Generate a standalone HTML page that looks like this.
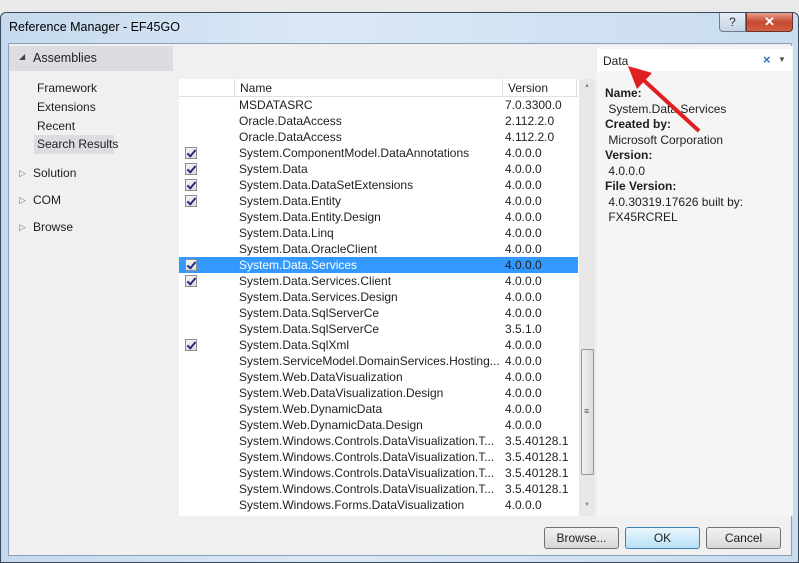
<!DOCTYPE html>
<html><head><style>
*{margin:0;padding:0;box-sizing:border-box}
body{width:799px;height:563px;background:#e9e9e9;font-family:"Liberation Sans",sans-serif;font-size:12px;color:#1e1e1e;position:relative;overflow:hidden}
.win{position:absolute;left:0;top:12px;width:799px;height:551px;border:1px solid #3a4a5a;border-radius:6px 6px 0 0;background:linear-gradient(90deg,#c5d9ee,#dbe8f5 40%,#c9dcf0);}
.title{position:absolute;left:8px;top:7px;font-size:12.5px;color:#000}
.client{position:absolute;left:7px;top:30px;width:784px;height:513px;background:#f0f0f0;border:1px solid #8aa0b8}
.abs{position:absolute}
.row{position:absolute;left:0;width:399px;height:16px;line-height:16px}
.row .n{position:absolute;left:60px}
.row .v{position:absolute;left:326px}
.cb{position:absolute;left:6px;top:2px;width:12px;height:12px;border:1px solid #8f8f8f;background:linear-gradient(#f4f4f4,#dcdcdc)}
.cb:after{content:"";position:absolute;left:3px;top:0px;width:3px;height:7px;border:solid #2a2a80;border-width:0 2px 2px 0;transform:rotate(40deg)}
.btn{position:absolute;height:22px;border:1px solid #707070;border-radius:3px;background:linear-gradient(#f2f2f2,#e5e5e5 50%,#d8d8d8);text-align:center;line-height:20px;font-size:12px}
</style></head><body>
<div class="win">
<div class="title">Reference Manager - EF45GO</div>
<div class="abs" style="left:718px;top:0;width:27px;height:19px;border:1px solid #6d7d8e;border-top:0;border-radius:0 0 0 4px;background:linear-gradient(#e6eef7,#c4d3e3);text-align:center;font-size:12px;line-height:18px;color:#333">?</div>
<div class="abs" style="left:745px;top:0;width:47px;height:19px;border:1px solid #6d3030;border-top:0;border-radius:0 0 4px 0;background:linear-gradient(#e8a090,#c74a30 50%,#d06040);text-align:center;color:#fff;font-weight:bold;font-size:13px;line-height:18px">✕</div>
<div class="client">
 <div class="abs" style="left:0;top:2px;width:164px;height:25px;background:#dcdde0"></div>
 <div class="abs" style="left:10px;top:8px;font-size:8px;color:#444">◢</div>
 <div class="abs" style="left:24px;top:7px;font-size:12.5px">Assemblies</div>
 <div class="abs" style="left:28px;top:35px;line-height:19px;font-size:12px">Framework<br>Extensions<br>Recent</div>
 <div class="abs" style="left:25px;top:91px;width:80px;height:19px;background:#dcdde0"></div>
 <div class="abs" style="left:28px;top:93px;font-size:12px">Search Results</div>
 <div class="abs" style="left:10px;top:124px;font-size:9px;color:#777">▷</div><div class="abs" style="left:24px;top:122px;font-size:12px">Solution</div>
 <div class="abs" style="left:10px;top:151px;font-size:9px;color:#777">▷</div><div class="abs" style="left:24px;top:149px;font-size:12px">COM</div>
 <div class="abs" style="left:10px;top:178px;font-size:9px;color:#777">▷</div><div class="abs" style="left:24px;top:176px;font-size:12px">Browse</div>

 <div class="abs" style="left:170px;top:35px;width:416px;height:437px;background:#fff"></div>
 <div class="abs" style="left:170px;top:35px;width:399px;height:18px;border-bottom:1px solid #e0e0e0"></div>
 <div class="abs" style="left:225px;top:35px;width:1px;height:18px;background:#e0e0e0"></div>
 <div class="abs" style="left:493px;top:35px;width:1px;height:18px;background:#e0e0e0"></div>
 <div class="abs" style="left:567px;top:35px;width:1px;height:18px;background:#e0e0e0"></div>
 <div class="abs" style="left:231px;top:37px;font-size:12px">Name</div>
 <div class="abs" style="left:499px;top:37px;font-size:12px">Version</div>
 <div class="abs" style="left:570px;top:35px;width:16px;height:437px;background:#e8e8e8"></div>
 <div class="abs" style="left:575px;top:39px;font-size:6px;color:#888">▲</div>
 <div class="abs" style="left:575px;top:458px;font-size:6px;color:#888">▼</div>
 <div class="abs" style="left:572px;top:305px;width:13px;height:126px;border:1px solid #999;border-radius:2px;background:linear-gradient(90deg,#f0f0f0,#dadada)"></div>
 <div class="abs" style="left:575px;top:362px;font-size:9px;color:#555">≡</div>
 <div class="abs" style="left:588px;top:2px;width:196px;height:470px;background:#f5f5f5"></div>

 <div class="abs" style="left:588px;top:5px;width:195px;height:22px;background:#fff"></div>
 <div class="abs" style="left:594px;top:10px;font-size:12px">Data</div>
 <div class="abs" style="left:754px;top:8px;color:#3070c0;font-size:13px;font-weight:bold">×</div>
 <div class="abs" style="left:769px;top:11px;font-size:8px;color:#555">▼</div>

 <div class="abs" style="left:170px;top:53px">
 <div class="row" style="top:0"><span class="n">MSDATASRC</span><span class="v">7.0.3300.0</span></div>
 <div class="row" style="top:16px"><span class="n">Oracle.DataAccess</span><span class="v">2.112.2.0</span></div>
 <div class="row" style="top:32px"><span class="n">Oracle.DataAccess</span><span class="v">4.112.2.0</span></div>
 <div class="row" style="top:48px"><i class="cb"></i><span class="n">System.ComponentModel.DataAnnotations</span><span class="v">4.0.0.0</span></div>
 <div class="row" style="top:64px"><i class="cb"></i><span class="n">System.Data</span><span class="v">4.0.0.0</span></div>
 <div class="row" style="top:80px"><i class="cb"></i><span class="n">System.Data.DataSetExtensions</span><span class="v">4.0.0.0</span></div>
 <div class="row" style="top:96px"><i class="cb"></i><span class="n">System.Data.Entity</span><span class="v">4.0.0.0</span></div>
 <div class="row" style="top:112px"><span class="n">System.Data.Entity.Design</span><span class="v">4.0.0.0</span></div>
 <div class="row" style="top:128px"><span class="n">System.Data.Linq</span><span class="v">4.0.0.0</span></div>
 <div class="row" style="top:144px"><span class="n">System.Data.OracleClient</span><span class="v">4.0.0.0</span></div>
 <div class="row" style="top:160px;background:#3399ff"><i class="cb"></i><span class="n" style="color:#fff">System.Data.Services</span><span class="v">4.0.0.0</span></div>
 <div class="row" style="top:176px"><i class="cb"></i><span class="n">System.Data.Services.Client</span><span class="v">4.0.0.0</span></div>
 <div class="row" style="top:192px"><span class="n">System.Data.Services.Design</span><span class="v">4.0.0.0</span></div>
 <div class="row" style="top:208px"><span class="n">System.Data.SqlServerCe</span><span class="v">4.0.0.0</span></div>
 <div class="row" style="top:224px"><span class="n">System.Data.SqlServerCe</span><span class="v">3.5.1.0</span></div>
 <div class="row" style="top:240px"><i class="cb"></i><span class="n">System.Data.SqlXml</span><span class="v">4.0.0.0</span></div>
 <div class="row" style="top:256px"><span class="n">System.ServiceModel.DomainServices.Hosting...</span><span class="v">4.0.0.0</span></div>
 <div class="row" style="top:272px"><span class="n">System.Web.DataVisualization</span><span class="v">4.0.0.0</span></div>
 <div class="row" style="top:288px"><span class="n">System.Web.DataVisualization.Design</span><span class="v">4.0.0.0</span></div>
 <div class="row" style="top:304px"><span class="n">System.Web.DynamicData</span><span class="v">4.0.0.0</span></div>
 <div class="row" style="top:320px"><span class="n">System.Web.DynamicData.Design</span><span class="v">4.0.0.0</span></div>
 <div class="row" style="top:336px"><span class="n">System.Windows.Controls.DataVisualization.T...</span><span class="v">3.5.40128.1</span></div>
 <div class="row" style="top:352px"><span class="n">System.Windows.Controls.DataVisualization.T...</span><span class="v">3.5.40128.1</span></div>
 <div class="row" style="top:368px"><span class="n">System.Windows.Controls.DataVisualization.T...</span><span class="v">3.5.40128.1</span></div>
 <div class="row" style="top:384px"><span class="n">System.Windows.Controls.DataVisualization.T...</span><span class="v">3.5.40128.1</span></div>
 <div class="row" style="top:400px"><span class="n">System.Windows.Forms.DataVisualization</span><span class="v">4.0.0.0</span></div>
 </div>

 <div class="abs" style="left:596px;top:42px;line-height:15.5px;font-size:12px">
 <b>Name:</b><br>&nbsp;System.Data.Services<br><b>Created by:</b><br>&nbsp;Microsoft Corporation<br><b>Version:</b><br>&nbsp;4.0.0.0<br><b>File Version:</b><br>&nbsp;4.0.30319.17626 built by:<br>&nbsp;FX45RCREL
 </div>
 <svg class="abs" style="left:613px;top:17px" width="90" height="80"><line x1="77" y1="70" x2="16" y2="14" stroke="#e02020" stroke-width="4"/><polygon points="6,5 30,12 15,28" fill="#e02020"/></svg>

 <div class="btn" style="left:535px;top:483px;width:75px">Browse...</div>
 <div class="btn" style="left:616px;top:483px;width:75px;border-color:#3c7fb1;background:linear-gradient(#eaf6fd,#d0ebfa 50%,#b8e0f6)">OK</div>
 <div class="btn" style="left:697px;top:483px;width:75px">Cancel</div>
</div>
</div>
</body></html>
